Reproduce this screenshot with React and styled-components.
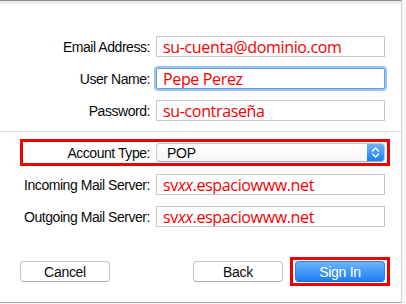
import styled, { createGlobalStyle } from 'styled-components';

const GlobalStyle = createGlobalStyle`
    html, body {
        margin: 0;
        padding: 0;
        background: #fafafa;
    }
    body {
        font-family: "Liberation Sans", Arial, sans-serif;
    }
`;

const Screen = styled.div`
    width: 406px;
    height: 304px;
    overflow: hidden;
    background: #f7f7f7;
`;

const Sheet = styled.div`
    width: 401px;
    height: 301px;
    background: #fff;
    border-top: 1px solid #8e8e8e;
    border-right: 1px solid #d2d2d2;
    border-bottom: 1px solid #a9a9a9;
    box-sizing: content-box;
    display: flex;
    flex-direction: column;
`;

const TopShade = styled.div`
    height: 3px;
    background: linear-gradient(#e6e6e6, #f4f4f4);
`;

const Section = styled.div`
    display: flex;
    flex-direction: column;
    gap: ${props => props.$gap || 11}px;
    padding-top: ${props => props.$top || 0}px;
`;

const Separator = styled.hr`
    margin: 10px 0 0 0;
    border: none;
    height: 1px;
    background: #dedede;
`;

const Row = styled.div`
    display: grid;
    grid-template-columns: 127px 229px;
    column-gap: 6px;
    align-items: center;
    margin-left: 23px;
    width: 364px;
    height: 21px;
    outline: ${props => props.$highlight ? '3px solid #f20000' : 'none'};
`;

const Label = styled.label`
    text-align: right;
    font-size: 14px;
    letter-spacing: -0.45px;
    color: #0a0a0a;
    white-space: nowrap;
`;

const Field = styled.div`
    box-sizing: border-box;
    height: 21px;
    border: 1px solid ${props => props.$focused ? '#6a9fdc' : '#c8c8c8'};
    box-shadow: ${props => props.$focused ? '0 0 0 2px #9cc4f2' : 'none'};
    border-radius: ${props => props.$focused ? '2px' : '0'};
    padding-left: 6px;
    display: flex;
    align-items: center;
    font-family: "Open Sans", "Noto Sans", sans-serif;
    font-size: 16px;
    letter-spacing: -0.35px;
    color: #f50000;
    white-space: nowrap;
    overflow: hidden;
`;

const Select = styled.div`
    box-sizing: border-box;
    height: 19px;
    border: 1px solid #c4c4c4;
    border-bottom-color: #ababab;
    border-radius: 4px;
    background: linear-gradient(#ffffff, #f6f6f6);
    display: flex;
    align-items: center;
    justify-content: space-between;
    overflow: hidden;
`;

const SelectValue = styled.span`
    padding-left: 10px;
    font-size: 14px;
    letter-spacing: -0.3px;
    color: #0a0a0a;
`;

const Stepper = styled.span`
    width: 17px;
    height: 100%;
    background: linear-gradient(#6db4fb, #1a7ef4);
    display: flex;
    align-items: center;
    justify-content: center;
`;

const Footer = styled.div`
    display: flex;
    align-items: center;
    padding: 30px 11px 0 20px;
`;

const Spacer = styled.div`
    flex: 1;
`;

const Highlight = styled.div`
    display: flex;
    margin-left: 7px;
    padding: 1px 2px;
    border: 3px solid #f20000;
`;

const Button = styled.button`
    box-sizing: border-box;
    width: 90px;
    height: 21px;
    border-radius: 4px;
    border: 1px solid ${props => props.$primary ? '#2b7fe6' : '#c6c6c6'};
    border-bottom-color: ${props => props.$primary ? '#1e6ad0' : '#acacac'};
    background: ${props => props.$primary ? 'linear-gradient(#6cb4fb, #1b7ff5)' : '#fff'};
    color: ${props => props.$primary ? '#fff' : '#0a0a0a'};
    font-family: "Liberation Sans", Arial, sans-serif;
    font-size: 14px;
    letter-spacing: -0.3px;
    padding: 0;
`;

function Chevrons() {
    return (
        <svg width="9" height="13" viewBox="0 0 9 13">
            <path d="M1.5 5 L4.5 2 L7.5 5 M1.5 8 L4.5 11 L7.5 8" fill="none" stroke="#fff" strokeWidth="1.4" strokeLinecap="round" strokeLinejoin="round" />
        </svg>
    );
}

function Server() {
    return (<>sv<i>xx</i>.espaciowww.net</>);
}

export default function App() {
    return (
        <Screen>
            <GlobalStyle />
            <Sheet>
                <TopShade />
                <Section $top={32}>
                    <Row>
                        <Label>Email Address:</Label>
                        <Field>su-cuenta@dominio.com</Field>
                    </Row>
                    <Row>
                        <Label>User Name:</Label>
                        <Field $focused>Pepe Perez</Field>
                    </Row>
                    <Row>
                        <Label>Password:</Label>
                        <Field>su-contraseña</Field>
                    </Row>
                </Section>
                <Separator />
                <Section $top={10}>
                    <Row $highlight>
                        <Label>Account Type:</Label>
                        <Select>
                            <SelectValue>POP</SelectValue>
                            <Stepper><Chevrons /></Stepper>
                        </Select>
                    </Row>
                    <Row>
                        <Label>Incoming Mail Server:</Label>
                        <Field><Server /></Field>
                    </Row>
                    <Row>
                        <Label>Outgoing Mail Server:</Label>
                        <Field><Server /></Field>
                    </Row>
                </Section>
                <Footer>
                    <Button>Cancel</Button>
                    <Spacer />
                    <Button>Back</Button>
                    <Highlight>
                        <Button $primary>Sign In</Button>
                    </Highlight>
                </Footer>
            </Sheet>
        </Screen>
    );
}
